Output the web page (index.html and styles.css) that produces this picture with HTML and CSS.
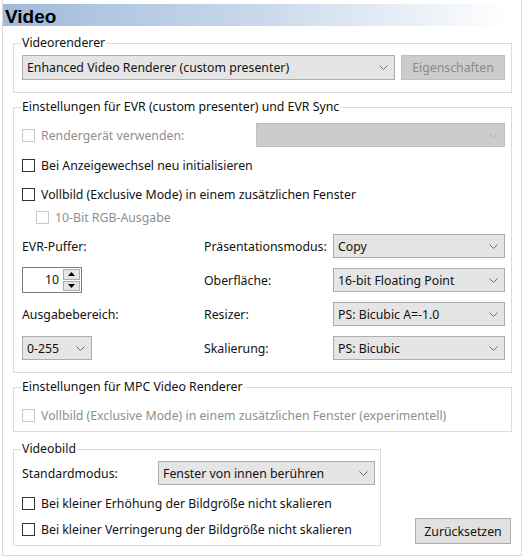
FILE: index.html
```html
<!DOCTYPE html>
<html lang="de">
<head>
    <meta charset="UTF-8">
    <title>Video</title>
    <link rel="stylesheet" href="styles.css">
</head>
<body>
<div class="panel">
    <div class="title">Video</div>

    <!--Videorenderer-->
    <fieldset class="group g1">
        <legend>Videorenderer</legend>
        <div class="row">
            <div class="select sel_renderer"><span>Enhanced Video Renderer (custom presenter)</span><svg class="chev" width="9" height="5"><polyline points="0.5,0.5 4.5,4.5 8.5,0.5"/></svg></div>
            <div class="btn btn_off">Eigenschaften</div>
        </div>
    </fieldset>

    <!--EVR-->
    <fieldset class="group g2">
        <legend>Einstellungen für EVR (custom presenter) und EVR Sync</legend>
        <div class="row r1">
            <label class="check off"><span class="box"></span>Rendergerät verwenden:</label>
            <div class="select select_off sel_device"><span></span><svg class="chev" width="9" height="5"><polyline points="0.5,0.5 4.5,4.5 8.5,0.5"/></svg></div>
        </div>
        <div class="row r2">
            <label class="check"><span class="box"></span>Bei Anzeigewechsel neu initialisieren</label>
        </div>
        <div class="row r3">
            <label class="check"><span class="box"></span>Vollbild (Exclusive Mode) in einem zusätzlichen Fenster</label>
        </div>
        <div class="row r4">
            <label class="check off sub"><span class="box"></span>10-Bit RGB-Ausgabe</label>
        </div>
        <div class="grid">
            <div>EVR-Puffer:</div>
            <div>Präsentationsmodus:</div>
            <div class="select"><span>Copy</span><svg class="chev" width="9" height="5"><polyline points="0.5,0.5 4.5,4.5 8.5,0.5"/></svg></div>

            <div class="spin">
                <span class="spin_val">10</span>
                <div class="spin_btns">
                    <div class="spin_btn"><svg width="7" height="4"><polygon points="0,4 3.5,0 7,4"/></svg></div>
                    <div class="spin_btn"><svg width="7" height="4"><polygon points="0,0 7,0 3.5,4"/></svg></div>
                </div>
            </div>
            <div>Oberfläche:</div>
            <div class="select"><span>16-bit Floating Point</span><svg class="chev" width="9" height="5"><polyline points="0.5,0.5 4.5,4.5 8.5,0.5"/></svg></div>

            <div>Ausgabebereich:</div>
            <div>Resizer:</div>
            <div class="select"><span>PS: Bicubic A=-1.0</span><svg class="chev" width="9" height="5"><polyline points="0.5,0.5 4.5,4.5 8.5,0.5"/></svg></div>

            <div class="select sel_range"><span>0-255</span><svg class="chev" width="9" height="5"><polyline points="0.5,0.5 4.5,4.5 8.5,0.5"/></svg></div>
            <div>Skalierung:</div>
            <div class="select"><span>PS: Bicubic</span><svg class="chev" width="9" height="5"><polyline points="0.5,0.5 4.5,4.5 8.5,0.5"/></svg></div>
        </div>
    </fieldset>

    <!--MPC Video Renderer-->
    <fieldset class="group g3">
        <legend>Einstellungen für MPC Video Renderer</legend>
        <div class="row r2">
            <label class="check off"><span class="box"></span>Vollbild (Exclusive Mode) in einem zusätzlichen Fenster (experimentell)</label>
        </div>
    </fieldset>

    <!--Videobild + Zuruecksetzen-->
    <div class="bottom">
        <fieldset class="group g4">
            <legend>Videobild</legend>
            <div class="row r1">
                <div class="mode_label">Standardmodus:</div>
                <div class="select sel_mode"><span>Fenster von innen berühren</span><svg class="chev" width="9" height="5"><polyline points="0.5,0.5 4.5,4.5 8.5,0.5"/></svg></div>
            </div>
            <div class="row r2">
                <label class="check"><span class="box"></span>Bei kleiner Erhöhung der Bildgröße nicht skalieren</label>
            </div>
            <div class="row r5">
                <label class="check"><span class="box"></span>Bei kleiner Verringerung der Bildgröße nicht skalieren</label>
            </div>
        </fieldset>
        <div class="btn btn_reset">Zurücksetzen</div>
    </div>
</div>
</body>
</html>
```

FILE: styles.css
```css
*{
    margin: 0;
    padding: 0;
    box-sizing: border-box;
}
body{
    background-color: #FFFFFF;
    font-family: "Noto Sans", "Open Sans", sans-serif;
    font-size: 12.3px;
    color: #111111;
}
.panel{
    margin-left: 2px;
    width: 520px;
    height: 556px;
    padding-top: 4px;
    border: 1px solid #dadada;
    border-top: none;
}
.title{
    height: 22px;
    padding: 4px 0 0 2px;
    line-height: 18px;
    font-family: "Liberation Sans", Arial, sans-serif;
    font-size: 19px;
    font-weight: bold;
    color: #000000;
    background: linear-gradient(to right, #a1bada 0%, #c9d9eb 50%, #ffffff 98%);
}

/*group boxes*/
.group{
    margin: 6px 9px 0 10px;
    border: 1px solid #dcdcdc;
    padding: 4px 6px 12px 8px;
}
.group legend{
    margin-left: -1px;
    padding: 0 1px;
    line-height: 16px;
}
.g1{
    margin-top: 9px;
}
.g2{
    padding-top: 8px;
    padding-bottom: 7px;
}
.g3{
    padding-top: 9px;
    padding-bottom: 5px;
}
.row{
    display: flex;
    align-items: center;
}
.g1 .row{
    height: 25px;
    gap: 6px;
}
.r1{
    height: 24px;
}
.r2, .r3{
    height: 22px;
    margin-top: 7px;
}
.r4{
    height: 20px;
    margin-top: 2px;
}
.g3 .r2{
    margin-top: 0;
}

/*checkboxes*/
.check{
    display: flex;
    align-items: center;
    white-space: nowrap;
}
.check .box{
    width: 13px;
    height: 13px;
    margin-right: 6px;
    border: 1px solid #333333;
    background-color: #FFFFFF;
}
.check.off{
    color: #8f8f8f;
}
.check.off .box{
    border-color: #c9c9c9;
}
.check.sub{
    margin-left: 14px;
}

/*dropdowns*/
.select{
    display: flex;
    align-items: center;
    justify-content: space-between;
    height: 24px;
    padding: 0 6px 0 4px;
    border: 1px solid #adadad;
    background-color: #e5e5e5;
    white-space: nowrap;
}
.select .chev{
    fill: none;
    stroke: #6d6d6d;
    stroke-width: 1;
}
.select_off{
    border-color: #bfbfbf;
    background-color: #cccccc;
}
.select_off .chev{
    stroke: #b3b3b3;
}
.sel_renderer{
    width: 373px;
    height: 25px;
}
.sel_device{
    width: 249px;
    margin-left: auto;
}
.sel_range{
    width: 70px;
}
.sel_mode{
    width: 217px;
}

/*buttons*/
.btn{
    display: flex;
    align-items: center;
    justify-content: center;
    border: 1px solid #adadad;
    background-color: #e1e1e1;
}
.btn_off{
    width: 104px;
    height: 25px;
    border-color: #bfbfbf;
    background-color: #cccccc;
    color: #8a8a8a;
}
.btn_reset{
    width: 96px;
    height: 26px;
    margin: 0 1px 2px 0;
}

/*EVR grid*/
.grid{
    display: grid;
    grid-template-columns: 182px 129px 172px;
    grid-auto-rows: 34px;
    align-items: center;
    margin-top: 2px;
}
.spin{
    display: flex;
    width: 60px;
    height: 26px;
    border: 1px solid #7a7a7a;
    background-color: #FFFFFF;
}
.spin_val{
    flex: 1;
    text-align: right;
    padding-right: 4px;
    line-height: 24px;
}
.spin_btns{
    display: flex;
    flex-direction: column;
    width: 18px;
    padding: 1px 1px 1px 0;
    gap: 1px;
}
.spin_btn{
    flex: 1;
    display: flex;
    align-items: center;
    justify-content: center;
    border: 1px solid #adadad;
    background-color: #e5e5e5;
}
.spin_btn svg{
    fill: #000000;
}

/*Videobild*/
.bottom{
    display: flex;
    justify-content: space-between;
    align-items: flex-end;
    margin: 9px 9px 0 10px;
}
.bottom .g4{
    width: 368px;
    margin: 0;
    padding: 4px 5px 5px 8px;
}
.mode_label{
    width: 136px;
}
.r5{
    height: 22px;
    margin-top: 4px;
}
```
